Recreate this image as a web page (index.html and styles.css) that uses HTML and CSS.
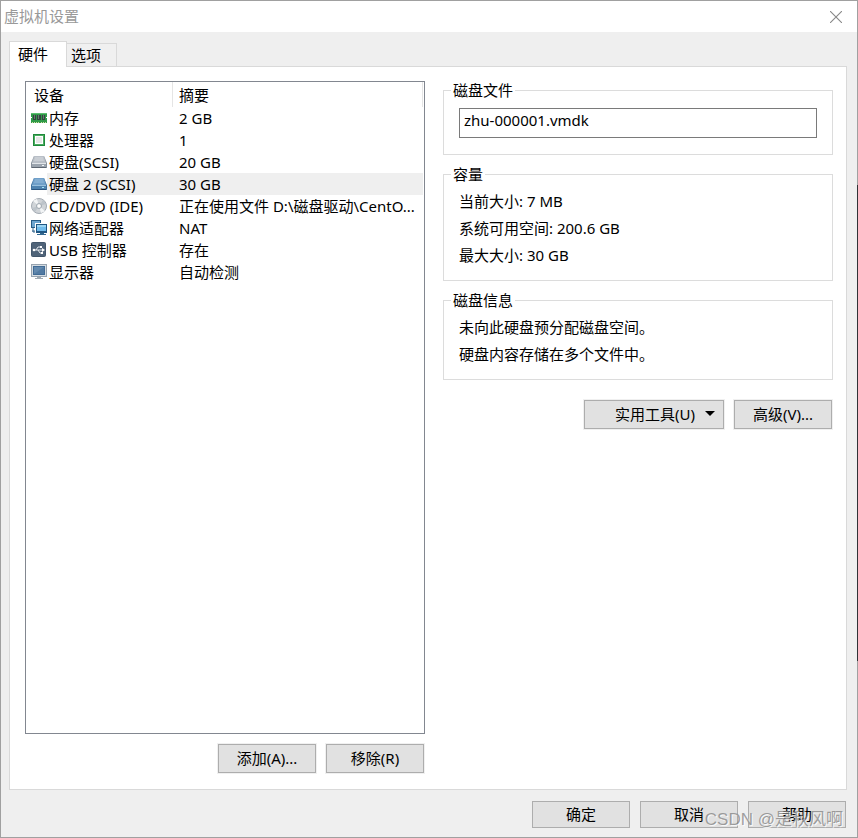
FILE: index.html
```html
<!DOCTYPE html>
<html lang="zh-CN">
<head>
<meta charset="utf-8">
<title>虚拟机设置</title>
<link rel="stylesheet" href="styles.css">
</head>
<body>
<div class="window">
  <header class="titlebar">
    <h1 class="title">虚拟机设置</h1>
    <button class="close" type="button" aria-label="关闭">
      <svg width="12" height="12" viewBox="0 0 12 12"><path d="M0 0L12 12M12 0L0 12" stroke="#888" stroke-width="1.1"/></svg>
    </button>
  </header>

  <main class="content">
    <div class="tabs" role="tablist">
      <button class="tab tab-active" type="button" role="tab" aria-selected="true">硬件</button>
      <button class="tab" type="button" role="tab" aria-selected="false">选项</button>
    </div>

    <section class="panel">
      <div class="devices">
        <div class="device-list">
          <table class="device-table">
            <colgroup><col class="col-icon"><col class="col-name"><col></colgroup>
            <thead>
              <tr><th colspan="2">设备</th><th class="summary-head">摘要</th></tr>
            </thead>
            <tbody>
              <tr>
                <td class="icon"><svg width="16" height="16" viewBox="0 0 16 16"><path d="M0 3h16v4h-1v1h1v5H0V8h1V7H0z" fill="#2f9a48"/><path d="M0 3h16v1H0z" fill="#5cbd70"/><path d="M2 5h3v5H2zM6 5h4v5H6zM11 5h3v5h-3z" fill="#33453f"/><path d="M3 5h1v4H3zM7 5h1v4H7zM12 5h1v4h-1z" fill="#65776f"/><path d="M1 12h1v1H1zM3 12h1v1H3zM5 12h1v1H5zM7 12h1v1H7zM10 12h1v1h-1zM12 12h1v1h-1zM14 12h1v1h-1z" fill="#cfe0a0"/></svg></td>
                <td>内存</td><td class="summary">2 GB</td>
              </tr>
              <tr>
                <td class="icon"><svg width="16" height="16" viewBox="0 0 16 16"><path d="M2 2h12v12H2z" fill="#1f8a3b"/><path d="M3 3h10v10H3z" fill="#4bab60"/><path d="M4 4h8v8H4z" fill="#fff"/><path d="M5 5h6v6H5z" fill="#e6e6e6"/></svg></td>
                <td>处理器</td><td class="summary">1</td>
              </tr>
              <tr>
                <td class="icon"><svg width="16" height="16" viewBox="0 0 16 16"><path d="M3 2h10l3 7v5H0V9z" fill="#87909b"/><path d="M3 2h10l2 7H1z" fill="#b9bfc7"/><path d="M4 3h8l1 4H3z" fill="#c9ced4"/><path d="M1 10h14v3H1z" fill="#9ba4ae"/><path d="M1 9h14v1H1z" fill="#e1e5e9"/><path d="M11 11h2v1h-2z" fill="#f2f6f8"/><path d="M1 13h14v1H1z" fill="#5d6671"/></svg></td>
                <td>硬盘(SCSI)</td><td class="summary">20 GB</td>
              </tr>
              <tr class="selected">
                <td class="icon"><svg width="16" height="16" viewBox="0 0 16 16"><path d="M3 2h10l3 7v5H0V9z" fill="#3f729f"/><path d="M3 2h10l2 7H1z" fill="#6f9fc9"/><path d="M4 3h8l1 4H3z" fill="#82add2"/><path d="M1 10h14v3H1z" fill="#4f83b0"/><path d="M1 9h14v1H1z" fill="#98c0de"/><path d="M11 11h2v1h-2z" fill="#a8e8fa"/><path d="M1 13h14v1H1z" fill="#2b5580"/></svg></td>
                <td>硬盘 2 (SCSI)</td><td class="summary">30 GB</td>
              </tr>
              <tr>
                <td class="icon"><svg width="16" height="16" viewBox="0 0 16 16"><circle cx="8" cy="8" r="7.5" fill="#d0d4d8" stroke="#a3aab2"/><path d="M8 8L2 3a8 8 0 0 1 4-2zM8 8l6 5a8 8 0 0 1-4 2z" fill="#f2f4f5"/><path d="M8 8l4-6 3 4zM8 8l-4 6-3-4z" fill="#bdc4ca"/><circle cx="8" cy="8" r="2.5" fill="#f5f5f5" stroke="#9ea7b0"/><circle cx="8" cy="8" r="1" fill="#fff"/></svg></td>
                <td>CD/DVD (IDE)</td><td class="summary">正在使用文件 D:\磁盘驱动\CentO...</td>
              </tr>
              <tr>
                <td class="icon"><svg width="16" height="16" viewBox="0 0 16 16"><path d="M0 0h10v8H0z" fill="#275c86"/><path d="M1 1h8v6H1z" fill="#6da5cf"/><path d="M2 8v4h4M1 11h4" fill="none" stroke="#386b92"/><path d="M4 3h12v10H4z" fill="#fff"/><path d="M5 4h11v9H5z" fill="#205783"/><path d="M6 5h9v6H6z" fill="#71bbea"/><path d="M6 5h9v2H6z" fill="#9bd4f2"/><path d="M9 13h4v1h2v1H6v-1h3z" fill="#31678f"/></svg></td>
                <td>网络适配器</td><td class="summary">NAT</td>
              </tr>
              <tr>
                <td class="icon"><svg width="16" height="16" viewBox="0 0 16 16"><rect x=".5" y=".5" width="14" height="14" rx="1" fill="#4f6378" stroke="#42566b"/><path d="M3 8h9M5 8l2-3h2M7 8l2 3h2" fill="none" stroke="#e6eaee"/><circle cx="3" cy="8" r="1.3" fill="#fff"/><path d="M11 6l3 2-3 2zM9 4h2v2H9zM10 10h2v2h-2z" fill="#fff"/></svg></td>
                <td>USB 控制器</td><td class="summary">存在</td>
              </tr>
              <tr>
                <td class="icon"><svg width="16" height="16" viewBox="0 0 16 16"><path d="M0 0h16v13H0z" fill="#97a3af"/><path d="M1 1h14v11H1z" fill="#d5dce2"/><path d="M2 2h12v9H2z" fill="#416b95"/><path d="M3 3h10v7H3z" fill="#6389ae"/><path d="M3 10l10-7v7z" fill="#527aa2"/><path d="M6 13h4v1h2v1H4v-1h2z" fill="#a0aab3"/></svg></td>
                <td>显示器</td><td class="summary">自动检测</td>
              </tr>
            </tbody>
          </table>
        </div>
        <div class="actions">
          <button class="btn btn-ring" type="button">添加(A)...</button>
          <button class="btn btn-ring" type="button">移除(R)</button>
        </div>
      </div>

      <div class="details">
        <fieldset class="group group-file">
          <legend>磁盘文件</legend>
          <input class="file" type="text" value="zhu-000001.vmdk" aria-label="磁盘文件" readonly>
        </fieldset>
        <fieldset class="group">
          <legend>容量</legend>
          <p>当前大小: 7 MB</p>
          <p>系统可用空间: 200.6 GB</p>
          <p>最大大小: 30 GB</p>
        </fieldset>
        <fieldset class="group">
          <legend>磁盘信息</legend>
          <p>未向此硬盘预分配磁盘空间。</p>
          <p>硬盘内容存储在多个文件中。</p>
        </fieldset>
        <div class="actions">
          <button class="btn btn-ring btn-menu" type="button">实用工具(U)<svg width="10" height="5" viewBox="0 0 10 5"><path d="M0 0h10L5 5z" fill="#000"/></svg></button>
          <button class="btn btn-ring" type="button">高级(V)...</button>
        </div>
      </div>
    </section>
  </main>

  <footer class="footer">
    <button class="btn" type="button">确定</button>
    <button class="btn" type="button">取消</button>
    <button class="btn" type="button">帮助</button>
  </footer>
  <div class="watermark">CSDN @是秋风啊</div>
</div>
</body>
</html>
```
FILE: styles.css
```css
* {
  box-sizing: border-box;
}

body {
  margin: 0;
  color: #000;
  font: 15px/22px "Noto Sans", "Noto Sans CJK SC", sans-serif;
}

button,
input {
  font: inherit;
  color: inherit;
  margin: 0;
}

svg {
  display: block;
}

.window {
  position: relative;
  display: flex;
  flex-direction: column;
  min-height: 100vh;
  border: 1px solid #a0a0a0;
  background: #efefef;
}

/* desktop showing along the right edge */
.window::after {
  content: "";
  position: absolute;
  top: 22%;
  right: -1px;
  width: 1px;
  height: 57%;
  background: #303236;
}

.titlebar {
  display: flex;
  align-items: center;
  justify-content: space-between;
  height: 31px;
  padding: 0 15px 0 3px;
  background: #fff;
}

.title {
  margin: 0;
  padding-bottom: 2px;
  color: #999;
  font-size: 15px;
  font-weight: 400;
}

.close {
  padding: 0;
  border: 0;
  background: none;
}

.content {
  flex: 1;
  display: flex;
  flex-direction: column;
  padding: 9px 10px 0 8px;
}

.tabs {
  z-index: 1;
  display: flex;
  align-items: flex-end;
  margin-bottom: -1px;
}

.tab {
  height: 24px;
  padding: 0 15px 0 4px;
  border: 1px solid #d9d9d9;
  border-left: 0;
  background: #f0f0f0;
  line-height: 22px;
}

.tab-active {
  height: 26px;
  padding: 0 18px 2px 8px;
  border-left: 1px solid #d9d9d9;
  border-bottom: 0;
  background: #fff;
}

.panel {
  flex: 1;
  display: flex;
  gap: 18px;
  padding: 14px 13px 16px 15px;
  border: 1px solid #d9d9d9;
  background: #fff;
}

.devices {
  flex: 400;
  min-width: 0;
  display: flex;
  flex-direction: column;
  gap: 10px;
}

.device-list {
  flex: 1;
  padding-right: 1px;
  border: 1px solid #828790;
}

.device-table {
  width: 100%;
  table-layout: fixed;
  border-collapse: separate;
  border-spacing: 0;
}

.device-table th {
  height: 25px;
  padding: 0 0 0 8px;
  border-right: 1px solid #e5e5e5;
  font-weight: 400;
  text-align: left;
}

.device-table td {
  height: 22px;
  padding: 0 0 0 2px;
  white-space: nowrap;
}

.device-table .icon {
  padding: 0 0 0 5px;
}

.device-table .summary,
.device-table .summary-head {
  padding-left: 6px;
}

.col-icon {
  width: 21px;
}

.col-name {
  width: 126px;
}

.selected td:not(.icon) {
  background: #efefef;
}

.actions {
  display: flex;
  justify-content: flex-end;
  gap: 10px;
  padding-right: 1px;
}

.btn {
  min-width: 98px;
  height: 27px;
  padding: 0 8px 2px;
  border: 1px solid #adadad;
  background: #e1e1e1;
  line-height: 20px;
}

.btn-ring {
  height: 29px;
  box-shadow: 0 0 0 1px #f0f0f0;
}

.btn-menu {
  display: flex;
  align-items: center;
  justify-content: flex-end;
  gap: 10px;
  min-width: 140px;
}

.details {
  flex: 390;
  min-width: 0;
}

.group {
  margin: 0 0 10px;
  padding: 5px 15px 11px;
  border: 1px solid #dcdcdc;
}

.group-file {
  padding: 9px 15px 16px;
}

.group legend {
  margin-left: -8px;
  padding: 0 2px;
  line-height: 18px;
}

.group p {
  margin: 0;
  line-height: 27px;
}

.file {
  display: block;
  width: 100%;
  height: 30px;
  padding: 0 4px 6px;
  border: 1px solid #7a7a7a;
  background: #fff;
}

.details .actions {
  margin-top: 20px;
}

.footer {
  display: flex;
  justify-content: flex-end;
  gap: 10px;
  padding: 11px 11px 9px;
}

.watermark {
  position: absolute;
  right: 14px;
  bottom: 5px;
  color: rgba(130, 130, 130, 0.75);
  font: 17px/24px "Liberation Sans", "Noto Sans CJK SC", sans-serif;
  text-shadow: 1px 1px 0 rgba(255, 255, 255, 0.8);
}
```
